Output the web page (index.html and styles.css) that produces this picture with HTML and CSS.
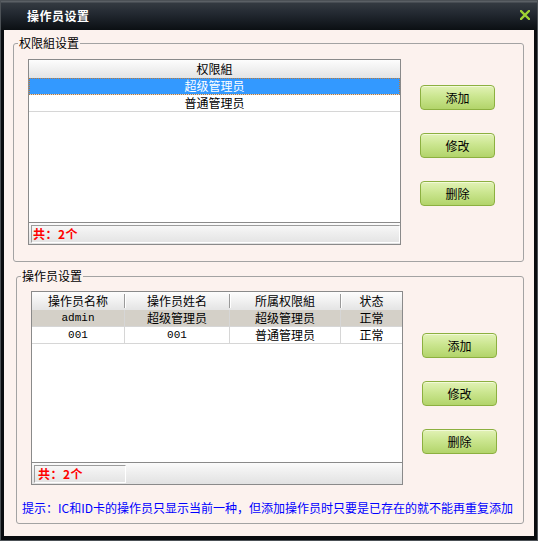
FILE: index.html
```html
<!DOCTYPE html>
<html lang="zh">
<head>
<meta charset="utf-8">
<title>操作员设置</title>
<link rel="stylesheet" href="styles.css">
</head>
<body>
<div class="window">
  <div class="titlebar">
    <span class="title">操作员设置</span>
    <svg class="close" width="10" height="10" viewBox="0 0 10 10"><path d="M1 1 L9 9 M9 1 L1 9" stroke="#9fd334" stroke-width="2.4" stroke-linecap="square"/></svg>
  </div>
  <div class="content">
    <fieldset class="group group1">
      <legend>权限組设置</legend>
      <div class="group-row">
        <div class="grid grid1">
          <div class="head"><div class="hcell">权限組</div></div>
          <div class="row selected"><div class="cell">超级管理员</div></div>
          <div class="row"><div class="cell">普通管理员</div></div>
          <div class="fill"></div>
          <div class="status"><div class="panel full">共：2个</div></div>
        </div>
        <div class="buttons b1">
          <button class="btn">添加</button>
          <button class="btn">修改</button>
          <button class="btn">删除</button>
        </div>
      </div>
    </fieldset>
    <fieldset class="group group2">
      <legend>操作员设置</legend>
      <div class="group-row">
        <div class="grid grid2">
          <div class="head cols">
            <div class="hcell">操作员名称</div>
            <div class="hcell">操作员姓名</div>
            <div class="hcell">所属权限組</div>
            <div class="hcell">状态</div>
          </div>
          <div class="row cols gray">
            <div class="cell mono">admin</div>
            <div class="cell">超级管理员</div>
            <div class="cell">超级管理员</div>
            <div class="cell">正常</div>
          </div>
          <div class="row cols">
            <div class="cell mono">001</div>
            <div class="cell mono">001</div>
            <div class="cell">普通管理员</div>
            <div class="cell">正常</div>
          </div>
          <div class="fill"></div>
          <div class="status"><div class="panel short">共：2个</div></div>
        </div>
        <div class="buttons b2">
          <button class="btn">添加</button>
          <button class="btn">修改</button>
          <button class="btn">删除</button>
        </div>
      </div>
      <p class="hint">提示：IC和ID卡的操作员只显示当前一种，但添加操作员时只要是已存在的就不能再重复添加</p>
    </fieldset>
  </div>
</div>
</body>
</html>
```

FILE: styles.css
```css
* { box-sizing: border-box; }
html, body { margin: 0; padding: 0; background: #000; }
body {
  font-family: "Noto Sans CJK SC", "Liberation Sans", sans-serif;
  font-size: 12px;
  color: #000;
}
.window {
  width: 538px;
  height: 541px;
  background: #0a0c0f;
  border: 1px solid #4c5156;
  display: flex;
  flex-direction: column;
}
.titlebar {
  height: 29px;
  flex: none;
  display: flex;
  align-items: center;
  justify-content: space-between;
  padding: 0 7px 0 26px;
  background: linear-gradient(#5b6065 0, #5b6065 1px, #343a41 2px, #222830 45%, #0b0f13 100%);
}
.title {
  color: #fff;
  font-weight: bold;
  font-size: 12px;
  letter-spacing: 0.5px;
  line-height: 14px;
}
.close { display: block; margin-top: -1px; }
.content {
  flex: 1;
  margin: 0 3px 4px 3px;
  background: #fcf2ee;
  padding-top: 6px;
}
.group {
  margin: 0;
  border: 1px solid #a3a3a3;
  border-radius: 3px;
  padding: 0;
  min-width: 0;
}
.group legend {
  font-size: 12px;
  line-height: 14px;
  padding: 0 1px;
}
.group1 {
  margin: 0 10px 0 9px;
  padding: 9px 0 16px 14px;
}
.group1 legend { margin-left: -10px; }
.group2 {
  margin: 7px 10px 0 12px;
  padding: 8px 0 8px 5px;
}
.group2 legend { margin-left: -1px; }
.group-row {
  display: flex;
  align-items: flex-start;
}
.group2 .group-row { padding-left: 9px; }
.grid {
  display: flex;
  flex-direction: column;
  border: 1px solid #8a8a8a;
  background: #fff;
}
.grid1 { width: 373px; height: 186px; }
.grid2 { width: 372px; height: 194px; }
.head {
  height: 18px;
  flex: none;
  background: linear-gradient(#fdfdfd, #e4e4e4);
  display: flex;
}
.hcell {
  flex: 1;
  text-align: center;
  line-height: 18px;
  white-space: nowrap;
}
.cols {
  display: grid;
  grid-template-columns: 93px 105px 111px 1fr;
}
.head.cols .hcell {
  border-right: 1px solid #9a9a9a;
  box-shadow: 1px 0 0 #fff;
  margin: 2px 0 2px;
  line-height: 14px;
}
.head.cols .hcell:last-child { border-right: none; box-shadow: none; }
.row {
  height: 17px;
  flex: none;
  border-bottom: 1px solid #d6d6d6;
  display: flex;
}
.row.cols { display: grid; height: 17px; }
.cell {
  flex: 1;
  text-align: center;
  line-height: 16px;
  white-space: nowrap;
  border-right: 1px solid #d6d6d6;
}
.cell:last-child { border-right: none; }
.row.selected {
  background: #3399ff;
  color: #fff;
  outline: 1px dotted #b97a3c;
  outline-offset: -1px;
}
.row.gray { background: #d4d0c8; }
.mono { font-family: "Liberation Mono", monospace; font-size: 11px; }
.fill { flex: 1; background: #fff; }
.status {
  height: 22px;
  flex: none;
  border-top: 1px solid #8a8a8a;
  background: linear-gradient(#fbfbfb, #f0f0f0 40%, #e2e2e2);
  padding: 2px 0 1px 2px;
  display: flex;
}
.panel {
  border-top: 1px solid #9c9c9c;
  border-left: 1px solid #9c9c9c;
  border-right: 1px solid #fff;
  border-bottom: 1px solid #fff;
  color: #ff0000;
  font-weight: bold;
  line-height: 16px;
  padding-left: 1px;
  letter-spacing: 0.5px;
}
.panel.full { flex: 1; }
.panel.short { width: 92px; padding-left: 3px; }
.buttons {
  display: flex;
  flex-direction: column;
  gap: 23px;
}
.b1 { margin: 26px 0 0 19px; }
.b2 { margin: 42px 0 0 19px; }
.btn {
  width: 75px;
  height: 25px;
  border: 1px solid #8cb040;
  border-radius: 4px;
  background: linear-gradient(#e2f2b6, #cbe690 45%, #b2d46a);
  box-shadow: inset 0 1px 0 #f2fad8;
  font-family: "Noto Sans CJK SC", sans-serif;
  font-size: 12px;
  color: #000;
  padding: 0;
  line-height: 22px;
}
.hint {
  margin: 16px 0 0 0;
  color: #0000ff;
  font-size: 12px;
  line-height: 14px;
  white-space: nowrap;
}
```
